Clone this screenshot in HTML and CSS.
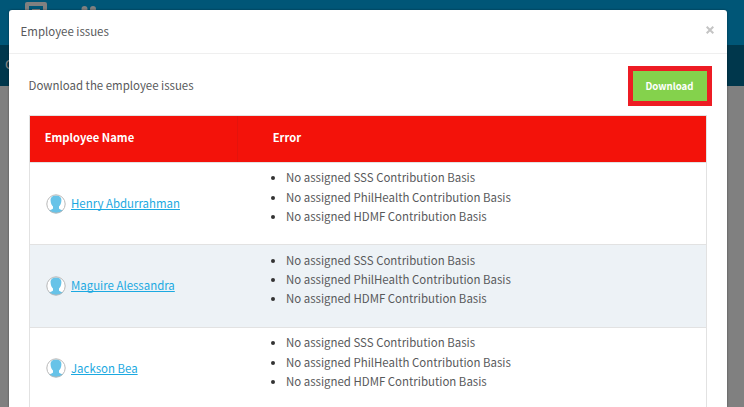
FILE: index.html
```html
<!DOCTYPE html>
<html lang="en">
<head>
    <meta charset="UTF-8">
    <meta name="viewport" content="width=device-width, initial-scale=1.0">
    <title>Employee issues</title>
    <link rel="stylesheet" href="styles.css">
</head>
<body>
    <svg class="sprite" width="0" height="0">
        <symbol id="avatar" viewBox="0 0 20 20">
            <circle cx="10" cy="10" r="9" fill="#fff"/>
            <path d="M10 1.500c3.800 0 5.600 2.200 5.400 5.200-.1 2.700-1.200 4.500-2.400 5.700v2.100c.3.900 2 1.200 4.200 1.800-1.900 1.900-4.400 2.900-7.200 2.900s-5.300-1-7.200-2.900c2.200-.6 3.900-.9 4.200-1.800v-2.100C5.800 11.200 4.700 9.400 4.600 6.700 4.400 3.700 6.200 1.500 10 1.500z" fill="#67c3e8"/>
            <circle cx="10" cy="10" r="9.200" fill="none" stroke="#b9b9b9" stroke-width="1"/>
        </symbol>
    </svg>

    <div class="page">
        <div class="topbar">
            <svg class="nav-icon" width="22" height="18" viewBox="0 0 22 18">
                <path d="M2 0h18a2 2 0 0 1 2 2v16h-4V4H4v14H0V2a2 2 0 0 1 2-2z" fill="#808080"/>
                <path d="M7 7h8v2H7z" fill="#808080"/>
            </svg>
            <svg class="nav-icon-users" width="16" height="14" viewBox="0 0 16 14">
                <circle cx="3.500" cy="3" r="3" fill="#808080"/>
                <circle cx="12" cy="3" r="3" fill="#808080"/>
            </svg>
        </div>
        <div class="subnav">C</div>
    </div>

    <div class="modal">
        <div class="modal-header">
            <span class="modal-title">Employee issues</span>
            <button class="close" aria-label="Close">
                <svg width="8" height="8" viewBox="0 0 8 8"><path d="M.7.7l6.600 6.600M7.300.7L.7 7.300" stroke="#c4c4c4" stroke-width="2"/></svg>
            </button>
        </div>
        <div class="modal-body">
            <div class="actions">
                <span>Download the employee issues</span>
                <button class="btn-download">Download</button>
            </div>
            <table class="issues">
                <thead>
                    <tr>
                        <th class="col-name">Employee Name</th>
                        <th class="col-error">Error</th>
                    </tr>
                </thead>
                <tbody>
                    <tr>
                        <td>
                            <div class="employee">
                                <svg class="avatar"><use href="#avatar"/></svg>
                                <a href="#">Henry Abdurrahman</a>
                            </div>
                        </td>
                        <td>
                            <ul>
                                <li>No assigned SSS Contribution Basis</li>
                                <li>No assigned PhilHealth Contribution Basis</li>
                                <li>No assigned HDMF Contribution Basis</li>
                            </ul>
                        </td>
                    </tr>
                    <tr>
                        <td>
                            <div class="employee">
                                <svg class="avatar"><use href="#avatar"/></svg>
                                <a href="#">Maguire Alessandra</a>
                            </div>
                        </td>
                        <td>
                            <ul>
                                <li>No assigned SSS Contribution Basis</li>
                                <li>No assigned PhilHealth Contribution Basis</li>
                                <li>No assigned HDMF Contribution Basis</li>
                            </ul>
                        </td>
                    </tr>
                    <tr>
                        <td>
                            <div class="employee">
                                <svg class="avatar"><use href="#avatar"/></svg>
                                <a href="#">Jackson Bea</a>
                            </div>
                        </td>
                        <td>
                            <ul>
                                <li>No assigned SSS Contribution Basis</li>
                                <li>No assigned PhilHealth Contribution Basis</li>
                                <li>No assigned HDMF Contribution Basis</li>
                            </ul>
                        </td>
                    </tr>
                </tbody>
            </table>
        </div>
    </div>
</body>
</html>
```

FILE: styles.css
```css
* {
    box-sizing: border-box;
}
body {
    margin: 0;
    height: 407px;
    overflow: hidden;
    background-color: #808080;
    color: #58595b;
    font-family: "Noto Sans CJK SC", "Open Sans", sans-serif;
    font-size: 11.45px;
    line-height: 19.4px;
}
button {
    padding: 0;
    border: none;
    font-family: inherit;
    cursor: pointer;
}
.sprite {
    position: absolute;
}
.topbar {
    display: flex;
    height: 45px;
    padding-left: 25px;
    background-color: #005677;
}
.nav-icon {
    margin-top: 2px;
}
.nav-icon-users {
    margin: 6px 0 0 34px;
}
.subnav {
    height: 41px;
    padding: 10px 0 0 5px;
    background-color: #00374c;
    color: #808080;
    font-weight: 500;
}

/* modal lies over the dimmed page */
.modal {
    position: absolute;
    top: 10px;
    left: 9px;
    width: 718px;
    height: 397px;
    overflow: hidden;
    background-color: #fff;
    border-radius: 3px 3px 0 0;
    box-shadow: 0 0 2px rgba(0, 0, 0, 0.5);
}
.modal-header {
    display: flex;
    align-items: center;
    justify-content: space-between;
    height: 44px;
    padding: 0 13.5px 0 11.6px;
    border-bottom: 1px solid #efefef;
}
.close {
    display: flex;
    background: none;
    margin-bottom: 4px;
}
.modal-body {
    padding: 12px 20px 0;
}
.actions {
    display: flex;
    align-items: center;
    justify-content: space-between;
    height: 40px;
    margin: 0 -5px 0 -0.4px;
}
.btn-download {
    width: 84px;
    height: 40px;
    padding-right: 1px;
    border: 5px solid #ed1c24;
    background-color: #84d24c;
    color: #fff;
    font-size: 9.6px;
    font-weight: 700;
}
.issues {
    width: 678px;
    margin-top: 9px;
    border: 1px solid #e2e2e2;
    border-collapse: separate;
    border-spacing: 0;
    table-layout: fixed;
}
.issues th {
    height: 46px;
    padding: 0 0 2px 14.7px;
    background-color: #f3120a;
    color: #fff;
    font-size: 11.2px;
    font-weight: 700;
    text-align: left;
}
.issues .col-name {
    width: 208px;
    border-right: 1px solid #e5130c;
}
.issues .col-error {
    padding-left: 34.7px;
}
.issues td {
    height: 82.5px;
    padding: 0;
    border-top: 1px solid #e2e2e2;
}
.issues tbody tr:first-child td {
    height: 82px;
}
.issues tbody tr:nth-child(even) {
    background-color: #edf2f6;
}
.employee {
    display: flex;
    align-items: center;
    gap: 5.5px;
    padding-left: 15.5px;
}
.avatar {
    width: 20px;
    height: 20px;
}
.employee a {
    color: #1ba9e1;
    text-decoration-skip-ink: none;
    text-underline-offset: 1px;
}
.issues ul {
    margin: 0 0 12px;
    padding-left: 48px;
}
.issues li::marker {
    color: #333;
}
```
